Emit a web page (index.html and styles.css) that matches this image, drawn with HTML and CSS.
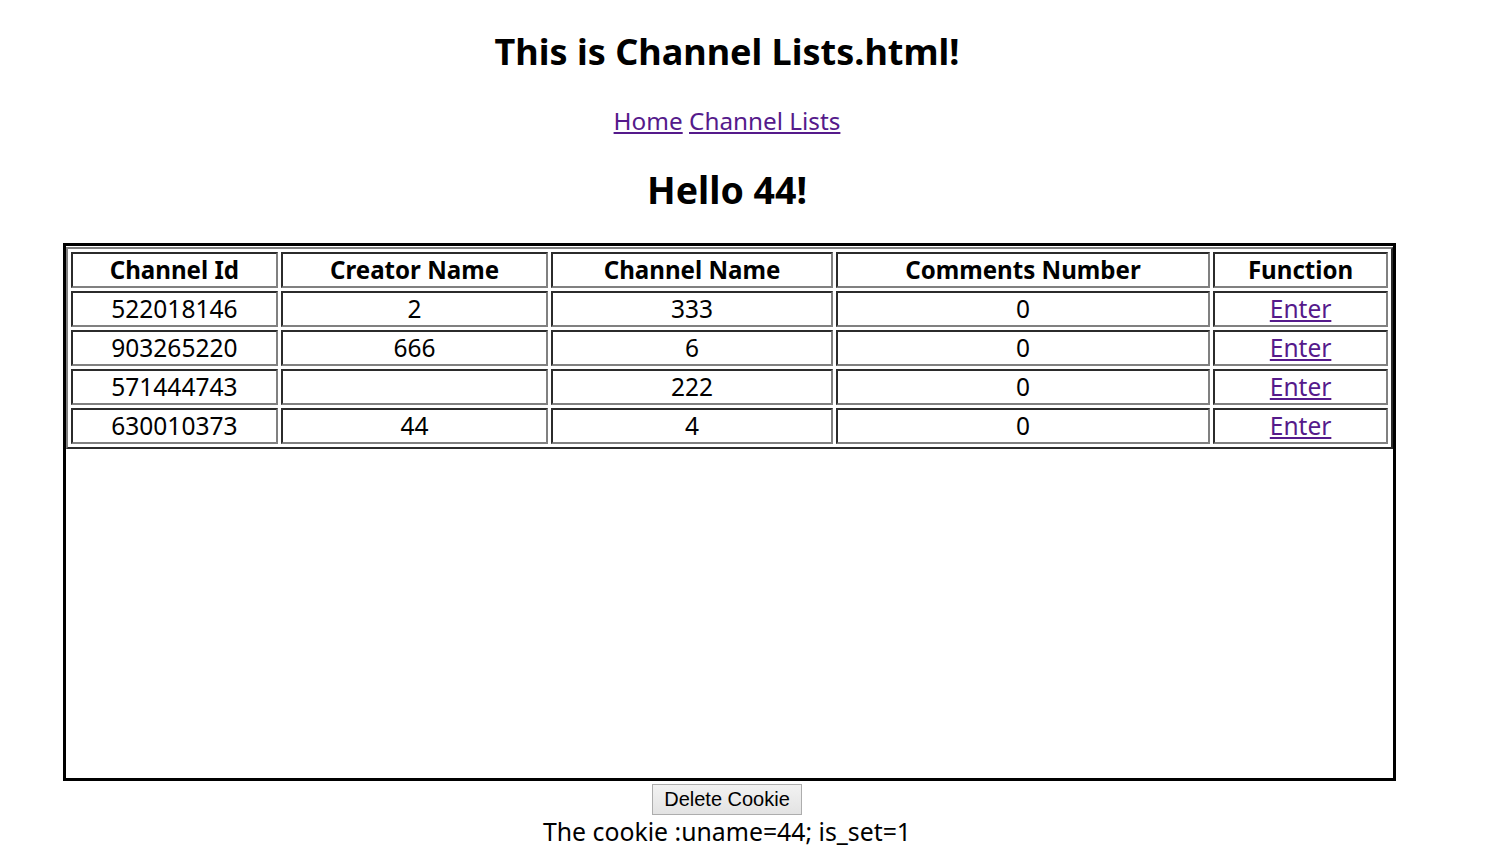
FILE: index.html
```html
<!DOCTYPE html>
<html>
<head>
<meta charset="utf-8">
<title>Channel Lists</title>
<link rel="stylesheet" href="styles.css">
</head>
<body>
<div class="page">
  <h1 class="title">This is Channel Lists.html!</h1>
  <nav class="nav"><a href="#">Home</a> <a href="#">Channel Lists</a></nav>
  <h2 class="hello">Hello 44!</h2>
  <div class="box">
    <table class="channels">
      <thead>
        <tr>
          <th class="c1">Channel Id</th>
          <th class="c2">Creator Name</th>
          <th class="c3">Channel Name</th>
          <th class="c4">Comments Number</th>
          <th class="c5">Function</th>
        </tr>
      </thead>
      <tbody>
        <tr><td>522018146</td><td>2</td><td>333</td><td>0</td><td><a href="#">Enter</a></td></tr>
        <tr><td>903265220</td><td>666</td><td>6</td><td>0</td><td><a href="#">Enter</a></td></tr>
        <tr><td>571444743</td><td></td><td>222</td><td>0</td><td><a href="#">Enter</a></td></tr>
        <tr><td>630010373</td><td>44</td><td>4</td><td>0</td><td><a href="#">Enter</a></td></tr>
      </tbody>
    </table>
  </div>
  <div class="actions"><button class="btn" type="button">Delete Cookie</button></div>
  <p class="cookie">The cookie :uname=44; is_set=1</p>
</div>
</body>
</html>
```
FILE: styles.css
```css
html, body {
  margin: 0;
  padding: 0;
  background: #fff;
}
body {
  font-family: "Noto Sans", "Open Sans", sans-serif;
  color: #000;
  font-size: 24px;
}
.page {
  width: 1454px;
  text-align: center;
}
.title {
  margin: 0;
  padding-top: 28px;
  font-size: 36px;
  line-height: 48px;
  font-weight: 700;
}
.nav {
  margin-top: 29px;
  line-height: 32px;
  font-size: 24.3px;
}
a, a:visited {
  color: #551a8b;
  text-decoration: underline;
}
.hello {
  margin: 29px 0 0;
  font-size: 37.5px;
  line-height: 48px;
  font-weight: 700;
}
.box {
  margin: 29px 0 0 63px;
  width: 1327px;
  height: 532px;
  border: 3px solid #000;
}
.channels {
  width: 100%;
  margin-top: 1px;
  border-collapse: separate;
  border-spacing: 3px;
  border-style: solid;
  border-width: 2px;
  border-color: #808080 #2b2b2b #2b2b2b #808080;
  font-size: 24.5px;
}
.channels th,
.channels td {
  height: 32px;
  padding: 0;
  line-height: 32px;
  text-align: center;
  border-style: solid;
  border-width: 2px;
  border-color: #2b2b2b #808080 #808080 #2b2b2b;
}
.channels th {
  font-weight: 700;
  font-size: 24.1px;
}
.c1 { width: 203px; }
.c2 { width: 264px; }
.c3 { width: 278px; }
.c4 { width: 371px; }
.c5 { width: 171px; }
.actions {
  margin-top: 3px;
  line-height: 0;
}
.btn {
  font-family: "Liberation Sans", Arial, sans-serif;
  font-size: 20px;
  height: 31px;
  width: 150px;
  padding: 0;
  color: #000;
  background: linear-gradient(#f2f2f2, #e3e3e3);
  border: 1px solid #adadad;
  border-radius: 0;
}
.cookie {
  margin: 0;
  line-height: 32px;
  font-size: 24.8px;
}
```
